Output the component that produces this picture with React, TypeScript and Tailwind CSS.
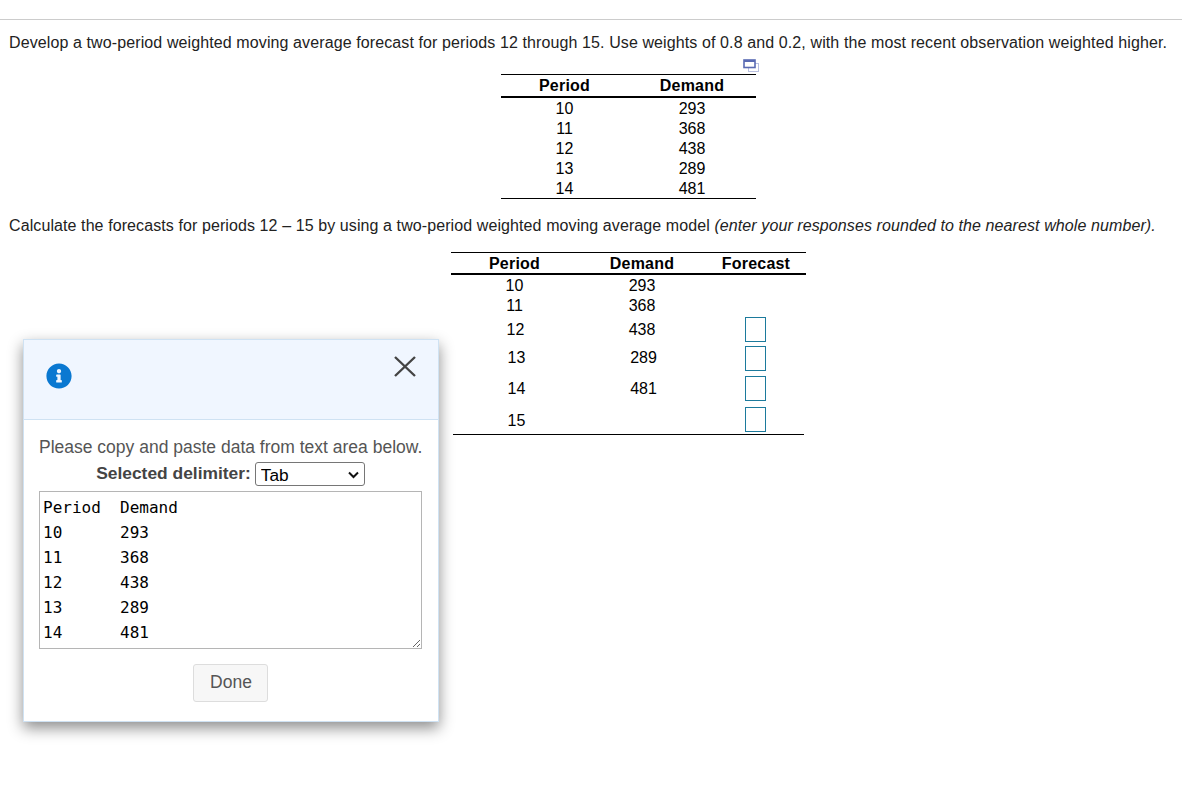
import { FaInfoCircle } from 'react-icons/fa';

const source = [
  ['10', '293'],
  ['11', '368'],
  ['12', '438'],
  ['13', '289'],
  ['14', '481'],
];

const pasteText = 'Period\tDemand\n10\t293\n11\t368\n12\t438\n13\t289\n14\t481';

function ExpandIcon() {
  return (
    <svg width="16" height="13" viewBox="0 0 16 13" fill="none">
      <rect x="5.5" y="4.5" width="10" height="8" stroke="#b9c0e0" />
      <rect x="1" y="1" width="11" height="7.5" fill="#fff" stroke="#5a6bb3" strokeWidth="1.6" />
      <rect x="1" y="1" width="11" height="2" fill="#5a6bb3" />
    </svg>
  );
}

function AnswerBox() {
  return <input readOnly className="block w-[21px] h-[25px] border border-[#1c7a9c] bg-white" />;
}

function SourceTable() {
  return (
    <div className="w-[255px] ml-[501px] border-t border-b border-black text-center text-black">
      <div className="grid grid-cols-[127px_128px] h-[23px] border-b-2 border-black font-bold leading-[21px] tracking-[0.2px]">
        <div>Period</div>
        <div>Demand</div>
      </div>
      {source.map(([period, demand]) => (
        <div key={period} className="grid grid-cols-[127px_128px] h-5 leading-5 pt-px">
          <div>{period}</div>
          <div>{demand}</div>
        </div>
      ))}
    </div>
  );
}

function ForecastTable() {
  return (
    <div className="w-[355px] ml-[451px] text-center text-black">
      <div className="grid grid-cols-[127px_128px_100px] h-[23px] border-t border-b-2 border-black font-bold leading-[22px] tracking-[0.2px]">
        <div>Period</div>
        <div>Demand</div>
        <div>Forecast</div>
      </div>
      <div className="grid grid-cols-[127px_128px_100px] h-5 leading-5 pt-px">
        <div>10</div>
        <div>293</div>
      </div>
      <div className="grid grid-cols-[127px_128px_100px] h-5 leading-5 pt-px">
        <div>11</div>
        <div>368</div>
      </div>
      <div className="mx-[2px] border-b border-black">
        <div className="grid grid-cols-[125px_128px_100px] h-[29px] items-center">
          <div>12</div>
          <div>438</div>
          <div className="flex justify-center pr-px"><AnswerBox /></div>
        </div>
        <div className="grid grid-cols-[125px_128px_100px] h-[28px] items-center">
          <div className="pl-[2px]">13</div>
          <div className="pl-[3px]">289</div>
          <div className="flex justify-center pr-px"><AnswerBox /></div>
        </div>
        <div className="grid grid-cols-[125px_128px_100px] h-[32px] items-center">
          <div className="pl-[2px] pt-[2px]">14</div>
          <div className="pl-[3px] pt-[2px]">481</div>
          <div className="flex justify-center pr-px"><AnswerBox /></div>
        </div>
        <div className="grid grid-cols-[125px_128px_100px] h-[30px] items-center">
          <div className="pl-[2px] pt-[3px]">15</div>
          <div />
          <div className="flex justify-center pr-px"><AnswerBox /></div>
        </div>
      </div>
    </div>
  );
}

function PasteDialog() {
  return (
    <div className="absolute left-[23px] top-[339px] w-[416px] h-[383px] bg-white border border-[#cfe2f3] shadow-[0_6px_14px_rgba(0,0,0,0.45)]">
      <div className="h-[80px] bg-[#f0f6ff] border-b border-[#cfe2f3] flex items-start justify-between pl-[22px] pr-[22px]">
        <FaInfoCircle className="mt-[23px] text-[26px] text-[#0a78d1]" />
        <svg className="mt-[16px]" width="22" height="21" viewBox="0 0 22 21" fill="none">
          <path d="M1 1 L21 20 M21 1 L1 20" stroke="#444" strokeWidth="2.4" />
        </svg>
      </div>
      <div className="pl-[15px] pr-[16px] text-[#555] text-[17.5px]">
        <p className="mt-[16px] text-center leading-[22px] whitespace-nowrap">Please copy and paste data from text area below.</p>
        <div className="mt-[3px] flex items-center justify-center h-[25px]">
          <span className="font-bold mr-[4px] text-[17.4px] text-[#444]">Selected delimiter:</span>
          <div className="relative">
            <select className="block appearance-none w-[110px] h-[24px] pl-[5px] pb-px border border-[#767676] rounded-[3px] bg-white text-black text-[17.3px]">
              <option>Tab</option>
            </select>
            <svg className="absolute right-[6px] top-[9px] pointer-events-none" width="11" height="8" viewBox="0 0 11 8" fill="none">
              <path d="M1 1.5 L5.5 6 L10 1.5" stroke="#111" strokeWidth="2" />
            </svg>
          </div>
        </div>
        <textarea
          readOnly
          value={pasteText}
          className="block mt-[5px] w-[383px] h-[158px] border border-[#b5b5b5] pl-[3px] pt-[3px] text-black text-base leading-[25px] font-['DejaVu_Sans_Mono',monospace] overflow-hidden [tab-size:8]"
        />
        <div className="mt-[15px] flex justify-center">
          <button className="w-[75px] h-[38px] pl-px pb-[2px] bg-[#f7f7f7] border border-[#ddd] rounded-[3px] text-[#555]">Done</button>
        </div>
      </div>
    </div>
  );
}

export default function App() {
  return (
    <div className="relative h-[797px] w-[1182px] overflow-hidden bg-white font-['Liberation_Sans',Arial,sans-serif] text-base text-[#222]">
      <div className="pt-[19px]">
        <div className="border-t border-[#ccc]" />
      </div>
      <p className="pl-[9px] mt-[13px] h-5 leading-5 whitespace-nowrap tracking-[0.107px]">
        Develop a two-period weighted moving average forecast for periods 12 through 15. Use weights of 0.8 and 0.2, with the most recent observation weighted higher.
      </p>
      <div className="flex pl-[743px] mt-[6px] h-[12px]">
        <ExpandIcon />
      </div>
      <div className="mt-[3px]">
        <SourceTable />
      </div>
      <p className="pl-[9px] mt-[17px] h-5 leading-5 whitespace-nowrap tracking-[0.094px]">
        Calculate the forecasts for periods 12 – 15 by using a two-period weighted moving average model <i>(enter your responses rounded to the nearest whole number).</i>
      </p>
      <div className="mt-[16px]">
        <ForecastTable />
      </div>
      <PasteDialog />
    </div>
  );
}
